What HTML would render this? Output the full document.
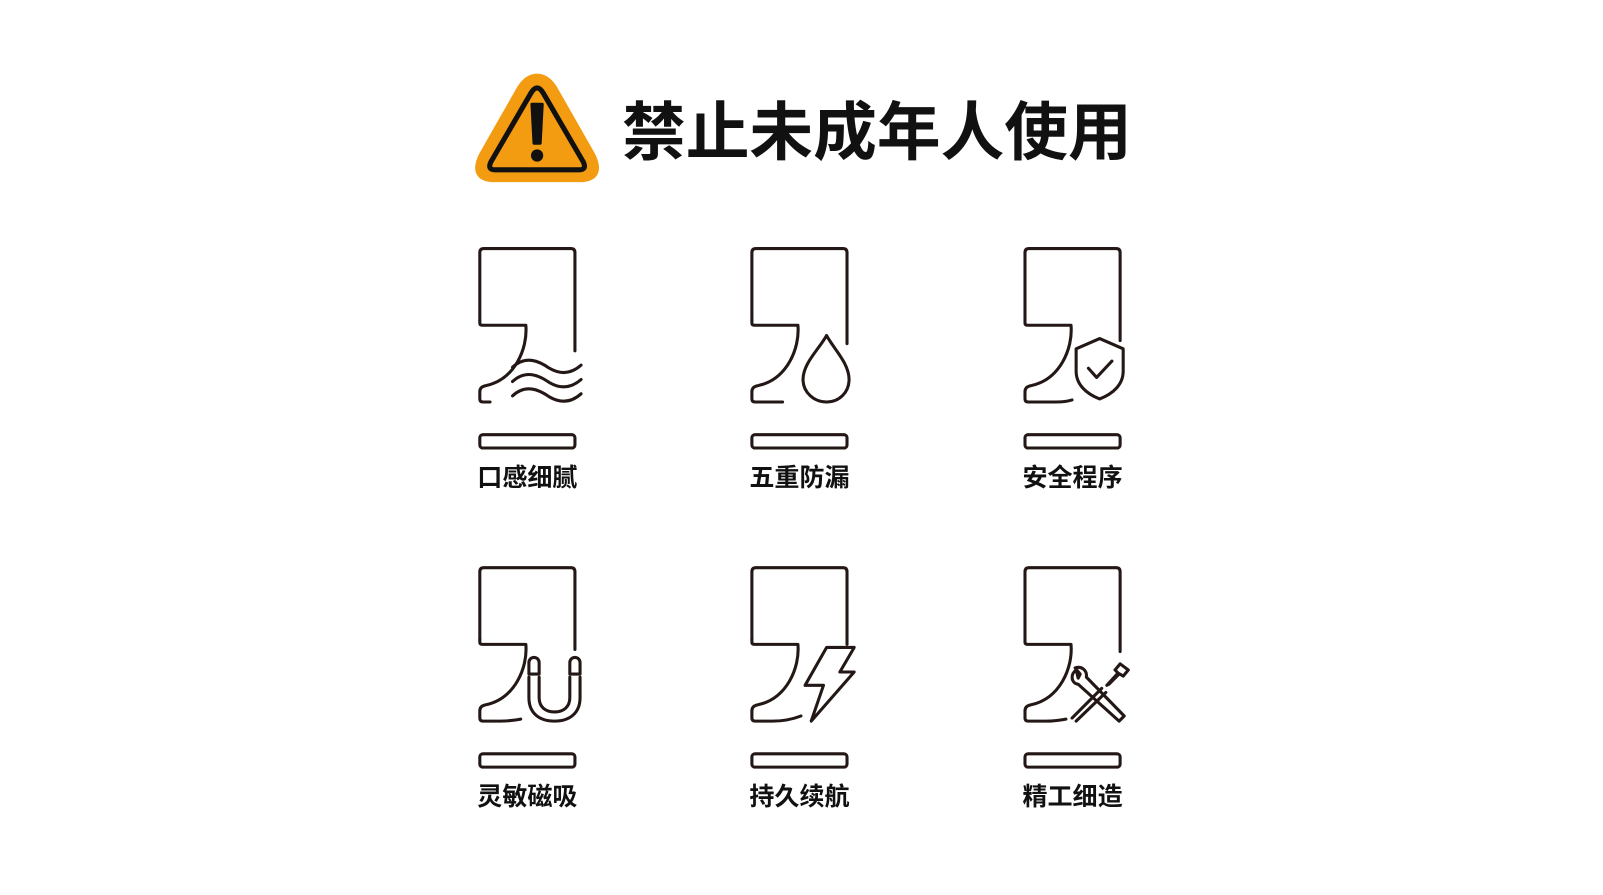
<!DOCTYPE html>
<html><head><meta charset="utf-8"><style>
html,body{margin:0;padding:0;background:#fff;width:1603px;height:895px;overflow:hidden}
svg{display:block}
text{font-family:"Liberation Sans","Noto Sans CJK SC",sans-serif;font-weight:bold;fill:#111}
</style></head><body>
<svg width="1603" height="895" viewBox="0 0 1567 875" xmlns="http://www.w3.org/2000/svg">
<rect width="1567" height="875" fill="#fff"/>
<!-- warning -->
<path d="M525,76 Q534,76 541,87 L578,152 Q588,172 570,174 L480,174 Q462,172 472,152 L509,87 Q516,76 525,76 Z" fill="#f39c12" stroke="#f39c12" stroke-width="8" stroke-linejoin="round"/>
<path d="M525,86 Q528,86 531,91 L570,158 Q574,166 566,166 L484,166 Q476,166 480,158 L519,91 Q522,86 525,86 Z" fill="none" stroke="#111" stroke-width="5" stroke-linejoin="round"/>
<path d="M520,102 L530,102 L528,140 L522,140 Z" fill="#111" stroke="#111" stroke-width="3" stroke-linejoin="round"/>
<circle cx="525" cy="152" r="6" fill="#111"/>
<text x="608" y="151" font-size="62.3">禁止未成年人使用</text>

<g fill="none" stroke="#231815" stroke-width="3" stroke-linecap="round" stroke-linejoin="round">
<g transform="translate(469,243)">
<path d="M0,70 L0,4 Q0,0 4,0 L89,0 Q93,0 93,4 L93,100"/>
<path d="M0,70 L0,73 Q0,75 3,75 L45,75 C47,98 34,128 6,134 Q0,135 0,140 L0,147 Q0,150 3,150 L10,150"/>
<rect x="0" y="182" width="93" height="13" rx="3"/>
<path d="M32,116 C45,104 58,110 68,117 C80,124 90,122 99,114"/>
<path d="M32,130 C45,118 58,124 68,131 C80,138 90,136 99,128"/>
<path d="M32,144 C45,132 58,138 68,145 C80,152 90,150 99,142"/>
</g>
<g transform="translate(735,243)">
<path d="M0,70 L0,4 Q0,0 4,0 L89,0 Q93,0 93,4 L93,93"/>
<path d="M0,70 L0,73 Q0,75 3,75 L45,75 C47,98 34,128 6,134 Q0,135 0,140 L0,147 Q0,150 3,150 L30,150"/>
<rect x="0" y="182" width="93" height="13" rx="3"/>
<path d="M73,85 C66,98 50,112 50,128 C50,140 60,150 73,150 C86,150 95,140 95,128 C95,112 80,98 73,85 Z"/>
</g>
<g transform="translate(1002,243)">
<path d="M0,70 L0,4 Q0,0 4,0 L89,0 Q93,0 93,4 L93,90"/>
<path d="M0,70 L0,73 Q0,75 3,75 L45,75 C47,98 34,128 6,134 Q0,135 0,140 L0,147 Q0,150 3,150 L30,150 Q40,150 46,148"/>
<rect x="0" y="182" width="93" height="13" rx="3"/>
<path d="M73,88 L96,98 L96,120 C96,133 86,142 73,147 C60,142 50,133 50,120 L50,98 Z"/>
<path d="M62,117 L70,126 L85,110"/>
</g>
<g transform="translate(469,555)">
<path d="M0,70 L0,4 Q0,0 4,0 L89,0 Q93,0 93,4 L93,80"/>
<path d="M0,70 L0,73 Q0,75 3,75 L45,75 C47,98 34,128 6,134 Q0,135 0,140 L0,147 Q0,150 3,150 L20,150 Q30,150 40,148"/>
<rect x="0" y="182" width="93" height="13" rx="3"/>
<path d="M48,107 L48,127 C48,142 58,150 73,150 C88,150 98,142 98,127 L98,107 M58,107 L58,127 C58,136 64,141 73,141 C82,141 88,136 88,127 L88,107"/>
<path d="M48,104 L48,93 C48,86 58,86 58,93 L58,104 Z M88,104 L88,93 C88,86 98,86 98,93 L98,104 Z"/>
</g>
<g transform="translate(735,555)">
<path d="M0,70 L0,4 Q0,0 4,0 L89,0 Q93,0 93,4 L93,75"/>
<path d="M0,70 L0,73 Q0,75 3,75 L45,75 C47,98 34,128 6,134 Q0,135 0,140 L0,147 Q0,150 3,150 L20,150 Q35,150 48,145"/>
<rect x="0" y="182" width="93" height="13" rx="3"/>
<path d="M73,78 L100,78 L86,102 L100,102 L58,150 L70,115 L52,115 Z"/>
</g>
<g transform="translate(1002,555)">
<path d="M0,70 L0,4 Q0,0 4,0 L89,0 Q93,0 93,4 L93,82"/>
<path d="M0,70 L0,73 Q0,75 3,75 L45,75 C47,98 34,128 6,134 Q0,135 0,140 L0,147 Q0,150 3,150 L20,150 Q30,150 40,148"/>
<rect x="0" y="182" width="93" height="13" rx="3"/>
<path d="M50,100 C44,104 45,113 52,114 L92,150 L97,145 L60,107 C61,100 55,96 49,98 L54,104 L52,108 Z"/>
<path d="M46,147 L75,118 M50,150 L79,122"/>
<path d="M82,114 L92,104 L88,100 L93,94 L101,100 L96,106 L91,103 L80,115 Z"/>
</g>
</g>
<g font-size="24.5" text-anchor="middle">
<text x="515.5" y="475">口感细腻</text>
<text x="781.5" y="475">五重防漏</text>
<text x="1048.5" y="475">安全程序</text>
<text x="515.5" y="787">灵敏磁吸</text>
<text x="781.5" y="787">持久续航</text>
<text x="1048.5" y="787">精工细造</text>
</g>
</svg>
</body></html>
